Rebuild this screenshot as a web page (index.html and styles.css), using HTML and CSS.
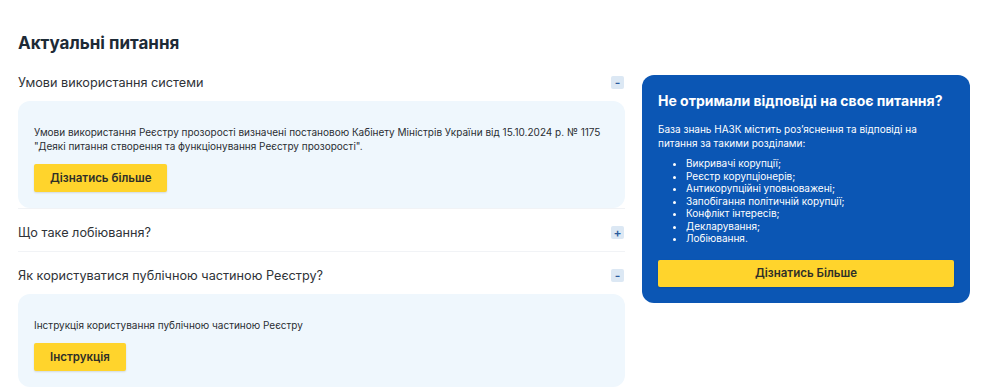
FILE: index.html
```html
<!DOCTYPE html>
<html lang="uk">
<head>
  <meta charset="UTF-8">
  <title>Актуальні питання</title>
  <link rel="stylesheet" href="styles.css">
</head>
<body>

<div class="page">
  <h2 class="title">Актуальні питання</h2>

  <div class="layout">
    <div class="faq">

      <div class="item">
        <div class="question">
          <span>Умови використання системи</span>
          <span class="toggle">-</span>
        </div>
        <div class="answer">
          <p>Умови використання Реєстру прозорості визначені постановою Кабінету Міністрів України від 15.10.2024 р. № 1175<br>"Деякі питання створення та функціонування Реєстру прозорості".</p>
          <a class="btn">Дізнатись більше</a>
        </div>
      </div>

      <div class="item">
        <div class="question">
          <span>Що таке лобіювання?</span>
          <span class="toggle">+</span>
        </div>
      </div>

      <div class="item">
        <div class="question">
          <span>Як користуватися публічною частиною Реєстру?</span>
          <span class="toggle">-</span>
        </div>
        <div class="answer">
          <p>Інструкція користування публічною частиною Реєстру</p>
          <a class="btn">Інструкція</a>
        </div>
      </div>

    </div>

    <div class="help">
      <h3>Не отримали відповіді на своє питання?</h3>
      <p>База знань НАЗК містить роз’яснення та відповіді на питання за такими розділами:</p>
      <ul>
        <li>Викривачі корупції;</li>
        <li>Реєстр корупціонерів;</li>
        <li>Антикорупційні уповноважені;</li>
        <li>Запобігання політичній корупції;</li>
        <li>Конфлікт інтересів;</li>
        <li>Декларування;</li>
        <li>Лобіювання.</li>
      </ul>
      <a class="btn btn-wide">Дізнатись Більше</a>
    </div>
  </div>
</div>

</body>
</html>
```

FILE: styles.css
```css
body {
  margin: 0;
  background: #fff;
  font-family: Inter, "Noto Sans", sans-serif;
  color: #2a2e33;
}

.page {
  padding: 33px 13px 0 18px;
}

.title {
  margin: 0 0 10px;
  font-size: 17px;
  line-height: 20px;
  font-weight: 700;
  color: #1d2a36;
}

.layout {
  display: grid;
  grid-template-columns: 607px 328px;
  column-gap: 17px;
  align-items: start;
}

.item {
  border-bottom: 1px solid #f1f3f6;
  margin-bottom: 4px;
}

.question {
  height: 38px;
  display: flex;
  align-items: center;
  justify-content: space-between;
  font-size: 12.7px;
  color: #2f3338;
}

.toggle {
  width: 13px;
  height: 13px;
  margin-right: 1px;
  border-radius: 2px;
  background: #dce8f4;
  color: #2c5c9e;
  font-size: 12px;
  line-height: 13px;
  text-align: center;
  font-weight: 600;
}

.answer {
  background: #eff7fd;
  border-radius: 12px;
  padding: 24px 16px 16px;
}

.answer p {
  margin: 0 0 11px;
  font-size: 10px;
  line-height: 14px;
  color: #2a2e33;
}

.btn {
  display: inline-block;
  background: #ffd42c;
  color: #2f2f28;
  font-size: 11.5px;
  font-weight: 600;
  line-height: 28px;
  padding: 0 16px;
  border-radius: 2px;
  box-shadow: 0 1px 2px rgba(0, 0, 0, 0.12);
  cursor: pointer;
}

.help {
  margin-top: 12px;
  background: #0b56b4;
  border-radius: 12px;
  padding: 16px;
  color: #fff;
}

.help h3 {
  margin: 0 0 11px;
  font-size: 14px;
  line-height: 20px;
  font-weight: 700;
}

.help p {
  margin: 0 0 7px;
  font-size: 10px;
  line-height: 14px;
}

.help ul {
  margin: 0 0 15px;
  padding-left: 28px;
  font-size: 10px;
  line-height: 12.5px;
}

.btn-wide {
  display: block;
  text-align: center;
  line-height: 27px;
}
```
